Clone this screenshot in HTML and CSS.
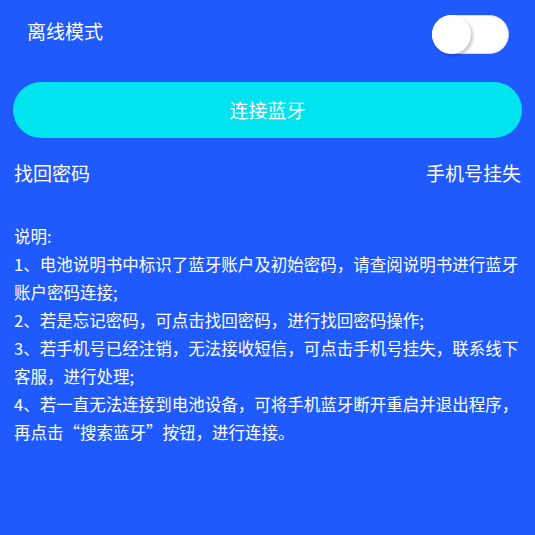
FILE: index.html
```html
<!DOCTYPE html>
<html lang="zh-CN">
<head>
<meta charset="utf-8">
<title>连接蓝牙</title>
<link rel="stylesheet" href="styles.css">
</head>
<body>
<div class="page">
  <div class="top-row">
    <span class="label">离线模式</span>
    <div class="switch"><div class="knob"></div></div>
  </div>
  <div class="connect-btn">连接蓝牙</div>
  <div class="links">
    <span class="link">找回密码</span>
    <span class="link">手机号挂失</span>
  </div>
  <div class="desc">
    <p>说明:</p>
    <p>1、电池说明书中标识了蓝牙账户及初始密码，请查阅说明书进行蓝牙账户密码连接;</p>
    <p>2、若是忘记密码，可点击找回密码，进行找回密码操作;</p>
    <p>3、若手机号已经注销，无法接收短信，可点击手机号挂失，联系线下客服，进行处理;</p>
    <p>4、若一直无法连接到电池设备，可将手机蓝牙断开重启并退出程序，再点击“搜索蓝牙”按钮，进行连接。</p>
  </div>
</div>
</body>
</html>
```

FILE: styles.css
```css
html, body {
  margin: 0;
  padding: 0;
  background: #1f5aff;
}
body {
  width: 535px;
  height: 535px;
  font-family: "Noto Sans CJK SC", "Noto Sans", sans-serif;
  color: #ffffff;
}
.page {
  padding: 15px 13px 0 13px;
}
.top-row {
  display: flex;
  justify-content: space-between;
  align-items: flex-start;
  padding: 0 13px 0 14px;
  height: 39px;
}
.label {
  font-size: 19px;
  line-height: 32px;
}
.switch {
  width: 77px;
  height: 39px;
  box-sizing: border-box;
  border-radius: 20px;
  background: #ffffff;
  border: 1px solid #dcdcdc;
  position: relative;
}
.knob {
  position: absolute;
  left: -1px;
  top: -1px;
  width: 39px;
  height: 39px;
  border-radius: 50%;
  background: #ffffff;
  box-shadow: 2px 2px 3px rgba(0, 0, 0, 0.22);
}
.connect-btn {
  margin-top: 28px;
  height: 56px;
  border-radius: 28px;
  background: #00e4ef;
  text-align: center;
  line-height: 55px;
  font-size: 19px;
}
.links {
  margin-top: 21px;
  display: flex;
  justify-content: space-between;
  padding: 0 1px;
  font-size: 19px;
  line-height: 28px;
}
.desc {
  margin-top: 35px;
  padding: 0 0 0 1px;
  font-size: 16.5px;
  line-height: 28px;
}
.desc p {
  margin: 0;
}
```
